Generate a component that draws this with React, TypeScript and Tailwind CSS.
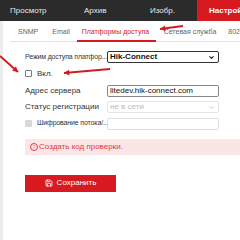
import { ChevronDown, Save } from 'lucide-react'

const nav = [
  { label: 'Просмотр', w: 'w-[74px]' },
  { label: 'Архив', w: 'w-[66px]' },
  { label: 'Изобр.', w: 'w-[57px]' },
]

function Arrow({ x1, y1, x2, y2 }: { x1: number; y1: number; x2: number; y2: number }) {
  const a = Math.atan2(y2 - y1, x2 - x1)
  const l = 6
  const p1 = [x2 - l * Math.cos(a - 0.5), y2 - l * Math.sin(a - 0.5)]
  const p2 = [x2 - l * Math.cos(a + 0.5), y2 - l * Math.sin(a + 0.5)]
  return (
    <g>
      <line x1={x1} y1={y1} x2={x2} y2={y2} stroke="#d01c22" strokeWidth="2" />
      <polygon points={`${x2},${y2} ${p1[0]},${p1[1]} ${p2[0]},${p2[1]}`} fill="#d01c22" />
    </g>
  )
}

export default function App() {
  return (
    <div className="relative h-[240px] w-[240px] overflow-hidden bg-white font-['Liberation_Sans',Arial,sans-serif] text-[8px] text-[#333]">
      <div className="flex h-[21px] bg-[#2b2b2b] text-[8px] text-[#e6e6e6]">
        {nav.map((n) => (
          <div key={n.label} className={`flex items-center pl-[10px] ${n.w}`}>
            {n.label}
          </div>
        ))}
        <div className="flex flex-1 items-center overflow-hidden whitespace-nowrap bg-[#d71920] pl-[12px] font-bold text-white">
          Настройка
        </div>
      </div>

      <div className="flex h-[219px]">
        <div className="w-[3px] bg-[#ececec]" />
        <div className="min-w-0 flex-1 pl-[7px]">
          <div className="flex h-[21px] items-end whitespace-nowrap border-b border-[#e2e2e2] text-[7px] text-[#666]">
            <div className="ml-[8px] pb-[4px]">SNMP</div>
            <div className="ml-[14px] pb-[4px]">Email</div>
            <div className="-mb-px ml-[7px] w-[81px] border-b-2 border-[#d71920] pb-[3px] pl-[5px] text-[#d71920]">
              Платформы доступа
            </div>
            <div className="ml-[8px] pb-[4px]">Сетевая служба</div>
            <div className="ml-[12px] pb-[4px]">802</div>
          </div>

          <div className="flex flex-col gap-[4.5px] pl-[15px] pt-[9px]">
            <div className="flex h-[12px] items-center">
              <span className="w-[82px] whitespace-nowrap text-[7px] tracking-[-0.15px]">Режим доступа платфор...</span>
              <div className="flex h-[12px] w-[112px] items-center justify-between rounded-[2px] border border-[#333] pl-[2px] pr-[3px] font-bold text-[#111]">
                Hik-Connect
                <ChevronDown className="h-[7px] w-[7px]" strokeWidth={3.5} />
              </div>
            </div>
            <div className="flex h-[12px] items-center">
              <span className="mr-[5px] h-[7px] w-[7px] rounded-[1px] border border-[#777] bg-white" />
              <span>Вкл.</span>
            </div>
            <div className="mt-[0.5px] flex h-[12px] items-center">
              <span className="w-[82px]">Адрес сервера</span>
              <div className="flex h-[12px] w-[112px] items-center rounded-[2px] border border-[#888] pl-[2px] text-[#111]">
                litedev.hik-connect.com
              </div>
            </div>
            <div className="flex h-[12px] items-center">
              <span className="w-[82px]">Статус регистрации</span>
              <div className="flex h-[12px] w-[112px] items-center justify-between rounded-[2px] border border-[#e4e4e4] pl-[2px] pr-[3px] text-[#bbb]">
                не в сети
                <ChevronDown className="h-[7px] w-[7px]" strokeWidth={2.5} />
              </div>
            </div>
            <div className="flex h-[12px] items-center">
              <span className="mr-[5px] h-[7px] w-[7px] rounded-[1px] bg-[#d8d8d8]" />
              <span className="w-[70px] whitespace-nowrap text-[7px] tracking-[-0.15px]">Шифрование потока/...</span>
              <div className="h-[12px] w-[112px] rounded-[2px] border border-[#e0e0e0]" />
            </div>
          </div>

          <div className="ml-[15px] mt-[9px] flex h-[16px] items-center gap-[1px] bg-[#fbe6e7] pl-[5px] text-[#e2383f]">
            <span className="flex h-[8px] w-[8px] items-center justify-center rounded-full border border-[#e2383f] text-[6px] leading-none">!</span>
            Создать код проверки.
          </div>

          <button
            type="button"
            className="ml-[15px] mt-[20px] flex h-[17px] w-[91px] items-center justify-center gap-[4px] bg-[#d71920] text-[8px] text-white"
          >
            <Save className="h-[8px] w-[8px]" strokeWidth={2.5} />
            Сохранить
          </button>
        </div>
      </div>

      <svg className="pointer-events-none absolute left-0 top-0" width="240" height="240">
        <Arrow x1={183} y1={26} x2={160} y2={29} />
        <Arrow x1={110} y1={69} x2={64} y2={73} />
        <Arrow x1={0} y1={56} x2={18} y2={72} />
      </svg>
    </div>
  )
}
